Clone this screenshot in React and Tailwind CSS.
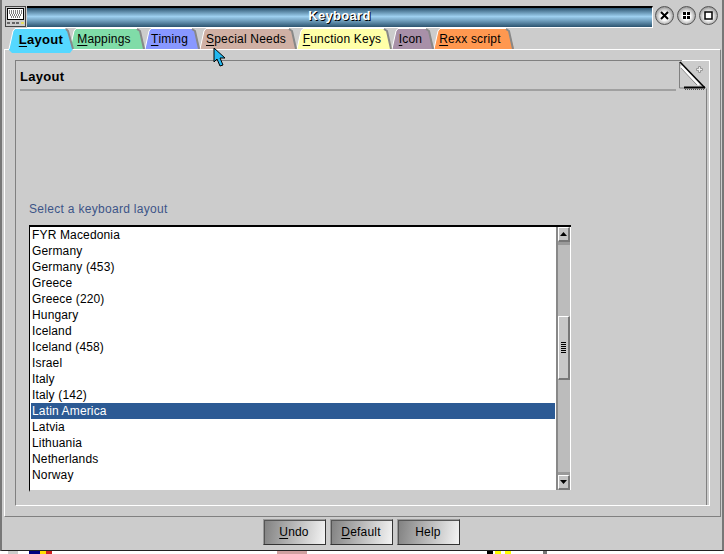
import React from 'react';

const tabs = [
    { label: 'Mappings', key: 'M', rest: 'appings', fill: '#80dca8', width: 'w-[75px]', w: 75, pad: 'pr-[7px]' },
    { label: 'Timing', key: 'T', rest: 'iming', fill: '#8898ff', width: 'w-[55px]', w: 55, pad: 'pr-[6px]' },
    { label: 'Special Needs', key: 'S', rest: 'pecial Needs', fill: '#d0b0a4', width: 'w-[97px]', w: 97, pad: 'pr-[5px]' },
    { label: 'Function Keys', key: 'F', rest: 'unction Keys', fill: '#ffffa8', width: 'w-[95px]', w: 95, pad: 'pr-[5px]' },
    { label: 'Icon', key: 'I', rest: 'con', fill: '#a890a8', width: 'w-[42px]', w: 42, pad: 'pr-[5px]' },
    { label: 'Rexx script', key: 'R', rest: 'exx script', fill: '#ff9850', width: 'w-[80px]', w: 80, pad: 'pr-[8px]' },
];

const layouts = [
    'FYR Macedonia', 'Germany', 'Germany (453)', 'Greece', 'Greece (220)', 'Hungary', 'Iceland',
    'Iceland (458)', 'Israel', 'Italy', 'Italy (142)', 'Latin America', 'Latvia', 'Lithuania',
    'Netherlands', 'Norway',
];

const KeyboardIcon = () => (
    <svg width="21" height="21" viewBox="0 0 21 21" className="shrink-0">
        <rect x="0.5" y="0.5" width="20" height="20" fill="#ccc" stroke="#444" />
        <rect x="2.5" y="2.5" width="16" height="11" fill="#fff" stroke="#000" />
        <path d="M4 5h13M4 7h13M5 9h11M6 11h9" stroke="#000" strokeDasharray="1 1" />
        <rect x="2" y="16" width="3" height="2" fill="#666" />
        <rect x="7" y="16" width="3" height="2" fill="#666" />
        <rect x="11" y="16" width="3" height="2" fill="#666" />
        <rect x="16" y="16" width="3" height="2" fill="#e6e060" />
    </svg>
);

const RoundButton = ({ children }) => (
    <button className="flex h-[19px] w-[19px] items-center justify-center rounded-full border border-[#555] bg-[radial-gradient(circle_at_50%_55%,#ffffff_30%,#a8a8a8_68%,#555555_100%)]">
        {children}
    </button>
);

const TabShape = ({ w, fill }) => (
    <svg width={w} height="21" viewBox={`0 0 ${w} 21`} className="absolute left-0 top-0">
        <path d={`M0 21 L4 3 L6 1 H${w - 8} L${w - 5} 3 L${w} 21 Z`} fill={fill} />
        <path d={`M${w - 8} 1 L${w - 5} 3 L${w - 1} 21`} fill="none" stroke="#888" strokeWidth="2" />
        <path d={`M0 21 L4 3 L6 0.5 H${w - 8}`} fill="none" stroke="#fff" />
    </svg>
);

const Tab = ({ tab }) => (
    <div className={`relative h-[21px] ${tab.width} shrink-0`}>
        <TabShape w={tab.w} fill={tab.fill} />
        <span className={`relative flex h-[22px] items-center justify-center ${tab.pad} text-[12px] tracking-[0.2px] text-black`}>
            <span className="underline underline-offset-2">{tab.key}</span>{tab.rest}
        </span>
    </div>
);

const ActiveTab = () => (
    <div className="relative z-10 h-[26px] w-[62px] shrink-0">
        <svg width="67" height="26" viewBox="0 0 67 26" className="absolute left-0 top-0">
            <path d="M1 20 L5 3 L7 1 H57 L60 3 L65 21 L62 25 H4 L1 22 Z" fill="#55d8ff" />
            <path d="M58 1 L60 3 L65 21" fill="none" stroke="#888" strokeWidth="2" />
            <path d="M1 21 L5 3 L7 0.5 H57" fill="none" stroke="#fff" />
        </svg>
        <span className="relative flex h-[23px] w-[64px] items-center justify-center pl-[2px] text-[13px] font-bold tracking-[0.3px] text-black">
            <span className="underline underline-offset-2">L</span>ayout
        </span>
    </div>
);

const ScrollButton = ({ up }) => (
    <div className="flex h-[15px] w-full shrink-0 items-center justify-center border-b-2 border-l border-r-2 border-t border-b-[#777] border-l-white border-r-[#777] border-t-white bg-[#c4c4c4]">
        <svg width="7" height="4" viewBox="0 0 7 4">
            <path d={up ? 'M3.5 0 L7 4 H0 Z' : 'M0 0 H7 L3.5 4 Z'} fill="#000" />
        </svg>
    </div>
);

const Scrollbar = () => (
    <div className="flex w-[15px] shrink-0 flex-col border-l-2 border-r border-l-[#888] border-r-white bg-[#999]">
        <ScrollButton up />
        <div className="mt-[3px] h-[71px] bg-[#bcbcbc]" />
        <div className="flex h-[64px] items-center justify-center border-b-2 border-l border-r-2 border-t border-b-[#777] border-l-white border-r-[#777] border-t-white bg-[#c8c8c8]">
            <div className="flex w-[5px] flex-col gap-[1px]">
                {[0, 1, 2, 3, 4, 5].map((i) => (
                    <div key={i} className="h-[1px] bg-black" />
                ))}
            </div>
        </div>
        <div className="mb-[3px] flex-1 bg-[#bcbcbc]" />
        <ScrollButton />
    </div>
);

const FooterButton = ({ hot, rest, plain }) => (
    <button className="flex h-[26px] w-[63px] items-center justify-center border border-b-[#333] border-l-[#999] border-r-[#333] border-t-[#999] bg-[linear-gradient(100deg,#808080,#f4f4f4)] text-[12px] tracking-[0.2px] text-black shadow-[inset_1px_1px_0_#555]">
        {plain ? plain : (<><span className="underline underline-offset-2">{hot}</span>{rest}</>)}
    </button>
);

export default function App() {
    return (
        <div className="flex h-[554px] w-[724px] flex-col overflow-hidden bg-white font-['Liberation_Sans',Arial,sans-serif]">
            <div className="relative flex h-[551px] flex-col border-b border-l-2 border-r-2 border-b-[#222] border-l-[#777] border-r-[#777] bg-[#cccccc]">
                {/* title bar */}
                <div className="flex h-[28px] shrink-0 items-start gap-[1px] pl-[3px] pt-[6px]">
                    <KeyboardIcon />
                    <div className="flex h-[22px] w-[626px] items-center justify-center border-b border-r border-t-2 border-b-white border-r-white border-t-black bg-[linear-gradient(#2c5470,#9ed0f0_45%,#2c5470)] pb-[3px] text-[13px] font-bold tracking-[0.3px] text-white [text-shadow:1px_1px_0_#000]">
                        Keyboard
                    </div>
                    <div className="ml-[1px] flex gap-[3px]">
                        <RoundButton>
                            <svg width="9" height="9" viewBox="0 0 9 9"><path d="M1 1 L8 8 M8 1 L1 8" stroke="#000" strokeWidth="2" /></svg>
                        </RoundButton>
                        <RoundButton>
                            <svg width="9" height="9" viewBox="0 0 9 9"><path d="M1 1h3v3H1zM5 1h3v3H5zM1 5h3v3H1zM5 5h3v3H5z" fill="#000" /></svg>
                        </RoundButton>
                        <RoundButton>
                            <svg width="9" height="9" viewBox="0 0 9 9"><rect x="1" y="1" width="7" height="7" fill="none" stroke="#000" strokeWidth="1.5" /></svg>
                        </RoundButton>
                    </div>
                </div>

                {/* tabs */}
                <div className="relative z-10 flex h-[21px] shrink-0 pl-[6px]">
                    <ActiveTab />
                    {tabs.map((tab) => (
                        <Tab key={tab.label} tab={tab} />
                    ))}
                </div>

                {/* notebook frame */}
                <div className="ml-[2px] mr-[1px] h-[468px] shrink-0 border-b border-l border-r border-t border-b-[#808080] border-l-white border-r-[#808080] border-t-white pl-[10px] pr-[10px] pt-[10px]">
                    <div className="relative h-[446px] border-b border-l border-r border-t border-b-white border-l-[#808080] border-r-white border-t-[#808080] pr-[2px]">
                        <div className="flex h-full flex-col border-r border-r-[#808080]">
                            <div className="ml-[4px] mr-[30px] mt-[5px] flex h-[25px] shrink-0 items-start border-b-2 border-b-[#a0a0a0] text-[13px] font-bold leading-[21px] tracking-[0.3px] text-black">
                                Layout
                            </div>
                            <div className="ml-[13px] mt-[110px] h-[16px] shrink-0 text-[12px] leading-[16px] tracking-[0.3px] text-[#3c5488]">
                                Select a keyboard layout
                            </div>
                            <div className="ml-[13px] mt-[8px] flex h-[267px] w-[542px] shrink-0 border-b-2 border-l border-t-2 border-b-[#ccc] border-l-black border-t-black bg-white">
                                <div className="ml-[1px] mr-[1px] flex-1">
                                    {layouts.map((name) => (
                                        <div
                                            key={name}
                                            className={`h-[16px] pl-[1px] text-[12px] leading-[16px] tracking-[0.15px] ${name === 'Latin America' ? 'bg-[#2c5a94] text-white' : 'text-black'}`}
                                        >
                                            {name}
                                        </div>
                                    ))}
                                </div>
                                <Scrollbar />
                            </div>
                        </div>

                        {/* white top edge right of the page fold */}
                        <div className="absolute right-[-1px] top-[-1px] h-[1px] w-[28px] bg-white" />

                        {/* page fold */}
                        <svg width="28" height="30" viewBox="0 0 28 30" className="absolute right-[2px] top-0">
                            <path d="M1 0 H28 V28 Z" fill="#cccccc" />
                            <path d="M1 1 V27 H26 Z" fill="#cccccc" />
                            <path d="M0.5 1 V27 H6" fill="none" stroke="#808080" />
                            <path d="M1 1 L26 27" stroke="#000" strokeWidth="1.5" />
                            <path d="M2 7 L18 24" stroke="#808080" strokeWidth="1" />
                            <path d="M2 5 L20 24" stroke="#fff" strokeWidth="2" />
                            <path d="M5 26.5 H26" stroke="#000" strokeWidth="2" />
                            <path d="M6 28.5 H26" stroke="#555" strokeDasharray="1 1" />
                            <path d="M17.5 7.5 h2 v-2 h2 v2 h2 v2 h-2 v2 h-2 v-2 h-2 Z" fill="#eee" stroke="#999" strokeWidth="1" />
                        </svg>
                    </div>
                </div>

                {/* footer buttons */}
                <div className="flex flex-1 items-start justify-center gap-[4px] pr-[2px] pt-[2px]">
                    <FooterButton hot="U" rest="ndo" />
                    <FooterButton hot="D" rest="efault" />
                    <FooterButton plain="Help" />
                </div>

                {/* mouse pointer */}
                <svg width="13" height="20" viewBox="0 0 13 20" className="absolute left-[211px] top-[47px] z-20">
                    <path d="M1 1 L1 15 L4 12 L7 19 L10 18 L7 11 L12 11 Z" fill="#22b8f0" stroke="#000" />
                </svg>
            </div>

            {/* whatever sits behind the window */}
            <div className="flex h-[3px] shrink-0 items-stretch">
                <div className="ml-[8px] w-[10px] bg-[#ccc]" />
                <div className="ml-[11px] w-[11px] bg-[#000080]" />
                <div className="w-[6px] bg-[#ffe000]" />
                <div className="w-[6px] bg-[#d02020]" />
                <div className="ml-[225px] w-[30px] bg-[#d0a0a0]" />
                <div className="ml-[180px] w-[6px] bg-black" />
                <div className="ml-[2px] w-[6px] bg-[#ffff00]" />
                <div className="ml-[4px] w-[6px] bg-[#ffff00]" />
                <div className="ml-[32px] w-[4px] bg-[#777]" />
            </div>
        </div>
    );
}
